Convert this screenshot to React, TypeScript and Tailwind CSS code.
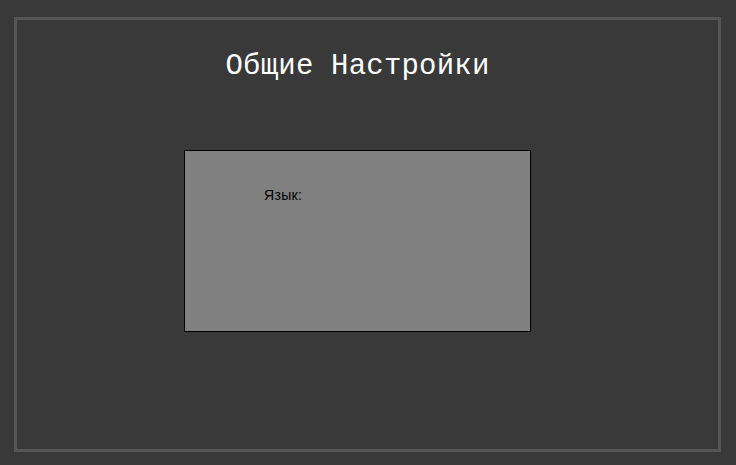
export default function App() {
  return (
    <div className="w-[736px] h-[465px] bg-[#393939] overflow-hidden pt-[17px] pl-[14px]">
      <div className="w-[707px] h-[435px] border-[3px] border-[#555555] flex flex-col items-center pr-[20px]">
        <div
          className="mt-[31px] h-[32px] leading-[32px] text-white text-[29px] whitespace-nowrap tracking-[0.2px]"
          style={{ fontFamily: '"Liberation Mono", monospace' }}
        >
          Общие Настройки
        </div>
        <div className="mt-[67px] w-[347px] h-[182px] bg-[#808080] border border-black pl-[79px] pt-[36px]">
          <div
            className="text-[14px] leading-[16px] text-black tracking-[0.3px]"
            style={{ fontFamily: '"Liberation Sans", sans-serif' }}
          >
            Язык:
          </div>
        </div>
      </div>
    </div>
  );
}
